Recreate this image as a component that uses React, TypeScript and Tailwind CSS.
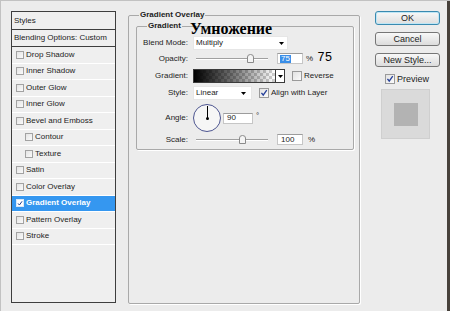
import React from "react";

function Check({ className }: { className: string }) {
  return (
    <svg viewBox="0 0 9 9" className={className}>
      <path d="M1.6 4.4 L3.6 6.8 L7.6 1.2" fill="none" stroke="currentColor" strokeWidth="1.5" />
    </svg>
  );
}

function SmallBox({ checked, white }: { checked?: boolean; white?: boolean }) {
  return (
    <div
      className={
        white
          ? "flex h-[8px] w-[8px] shrink-0 items-center justify-center border border-[#d8e8f8] bg-white"
          : "flex h-[8px] w-[8px] shrink-0 items-center justify-center border border-[#a2a2a2] bg-linear-to-br from-[#e4e4e4] to-[#fafafa]"
      }
    >
      {checked ? <Check className="h-[7px] w-[7px] text-[#1d3f8f]" /> : null}
    </div>
  );
}

function BigBox({ checked }: { checked?: boolean }) {
  return (
    <div className="flex h-[10px] w-[10px] shrink-0 items-center justify-center border border-[#9a9a9a] bg-linear-to-br from-[#e2e2e2] to-[#fbfbfb]">
      {checked ? <Check className="h-[8px] w-[8px] text-[#27419a]" /> : null}
    </div>
  );
}

function Arrow() {
  return (
    <svg width="5" height="3" viewBox="0 0 5 3" className="shrink-0">
      <path d="M0 0H5L2.5 3Z" fill="#000" />
    </svg>
  );
}

function Thumb({ className }: { className: string }) {
  return (
    <svg width="7" height="9" viewBox="0 0 7 9" className={className}>
      <path
        d="M0.5 3 Q0.5 0.5 3.5 0.5 Q6.5 0.5 6.5 3 L6.5 8.5 L0.5 8.5 Z"
        fill="#f4f4f4"
        stroke="#8a8a8a"
      />
    </svg>
  );
}

const items: { t: string; i?: boolean; a?: boolean }[] = [
  { t: "Drop Shadow" },
  { t: "Inner Shadow" },
  { t: "Outer Glow" },
  { t: "Inner Glow" },
  { t: "Bevel and Emboss" },
  { t: "Contour", i: true },
  { t: "Texture", i: true },
  { t: "Satin" },
  { t: "Color Overlay" },
  { t: "Gradient Overlay", a: true },
  { t: "Pattern Overlay" },
  { t: "Stroke" },
];

function Label({ children }: { children: React.ReactNode }) {
  return <div className="w-[52px] shrink-0 pr-[1px] text-right">{children}</div>;
}

export default function App() {
  return (
    <div className="flex h-[311px] w-[450px] overflow-hidden border-l border-t border-[#c2c2c2] bg-[#ececec] font-['Liberation_Sans',Arial,sans-serif] text-[8px] leading-none text-[#1c1c1c]">
      {/* Styles list */}
      <div className="ml-[10px] mt-[10px] flex h-[292px] w-[105px] shrink-0 flex-col border border-[#3e3e3e] bg-[#efefef]">
        <div className="flex h-[18px] shrink-0 items-center border-b border-[#3e3e3e] pl-[2px]">Styles</div>
        <div className="flex h-[17px] shrink-0 items-center border-b border-[#3e3e3e] pl-[2px]">
          Blending Options: Custom
        </div>
        {items.map((it) => (
          <div
            key={it.t}
            className={
              it.a
                ? "flex h-[16.5px] shrink-0 items-center border-b border-white bg-[#3597f0] pl-[4px] font-bold text-white"
                : it.i
                  ? "flex h-[16.5px] shrink-0 items-center border-b border-white pl-[13px]"
                  : "flex h-[16.5px] shrink-0 items-center border-b border-white pl-[4px]"
            }
          >
            <SmallBox checked={it.a} white={it.a} />
            <span className="ml-[2px]">{it.t}</span>
          </div>
        ))}
      </div>

      {/* Gradient Overlay group */}
      <div className="relative ml-[12px] mt-[14px] h-[289px] w-[232px] shrink-0 rounded-[2px] border border-[#a9a9a9] shadow-[1px_1px_0_#ffffff]">
        <div className="absolute left-[10px] top-[-6px] bg-[#ececec] px-[1px] text-[8px] font-bold leading-[10px]">
          Gradient Overlay
        </div>
        <div className="relative ml-[7px] mr-[5px] mt-[10px] flex h-[124px] flex-col rounded-[2px] border border-[#a9a9a9] pt-[9px] shadow-[1px_1px_0_#ffffff]">
          <div className="absolute left-[10px] top-[-6px] bg-[#ececec] px-[1px] font-bold leading-[10px]">Gradient</div>

          {/* Blend mode */}
          <div className="flex h-[14px] items-center">
            <Label>Blend Mode:</Label>
            <div className="ml-[4px] flex h-[14px] w-[95px] items-center justify-between border border-[#e6e6e6] bg-white pl-[2px] pr-[3px]">
              <span>Multiply</span>
              <Arrow />
            </div>
          </div>

          {/* Opacity */}
          <div className="mt-[2px] flex h-[13px] items-center">
            <Label>Opacity:</Label>
            <div className="relative ml-[7px] h-full w-[72px]">
              <div className="absolute left-0 right-0 top-[6px] h-[2px] border-b border-t border-b-white border-t-[#a0a0a0]" />
              <Thumb className="absolute left-[51px] top-[2px]" />
            </div>
            <div className="ml-[9px] flex h-[11px] w-[26px] items-center border border-[#c6c6c6] border-t-[#9c9c9c] bg-white pl-[2px]">
              <span className="bg-[#3a8ee8] px-[1px] text-white">75</span>
            </div>
            <span className="ml-[3px]">%</span>
            <span className="ml-[4px] font-['Liberation_Mono',monospace] text-[12.5px] leading-none text-black">75</span>
          </div>

          {/* Gradient */}
          <div className="mt-[4px] flex h-[14px] items-center">
            <Label>Gradient:</Label>
            <div className="ml-[4px] flex h-[14px] w-[92px] border border-[#3a3a3a]">
              <div className="h-full flex-1 bg-[repeating-conic-gradient(#cfcfcf_0_25%,#ffffff_0_50%)] bg-[length:6px_6px]">
                <div className="h-full w-full bg-linear-to-r from-black via-[#00000088] to-transparent" />
              </div>
              <div className="flex w-[9px] items-center justify-center border-l border-[#3a3a3a] bg-white">
                <Arrow />
              </div>
            </div>
            <div className="ml-[7px]">
              <BigBox />
            </div>
            <span className="ml-[2px]">Reverse</span>
          </div>

          {/* Style */}
          <div className="mt-[3px] flex h-[14px] items-center">
            <Label>Style:</Label>
            <div className="ml-[4px] flex h-[14px] w-[59px] items-center justify-between border border-[#e6e6e6] bg-white pl-[2px] pr-[5px]">
              <span>Linear</span>
              <Arrow />
            </div>
            <div className="ml-[7px]">
              <BigBox checked />
            </div>
            <span className="ml-[2px]">Align with Layer</span>
          </div>

          {/* Angle */}
          <div className="mt-[4px] flex h-[28px] items-center">
            <Label>Angle:</Label>
            <div className="relative ml-[4px] h-[28px] w-[28px] rounded-full border border-[#4d5590] bg-[#f6f6f6]">
              <div className="absolute left-[13px] top-[1px] h-[12px] w-[1px] bg-black" />
              <div className="absolute left-[12px] top-[12px] h-[3px] w-[3px] rounded-full bg-black" />
            </div>
            <div className="ml-[2px] flex h-[11px] w-[30px] items-center border border-[#c6c6c6] border-t-[#9c9c9c] bg-white pl-[3px]">
              90
            </div>
            <span className="mb-[4px] ml-[3px]">°</span>
          </div>

          {/* Scale */}
          <div className="mt-[2px] flex h-[11px] items-center">
            <Label>Scale:</Label>
            <div className="relative ml-[7px] h-full w-[72px]">
              <div className="absolute left-0 right-0 top-[5px] h-[2px] border-b border-t border-b-white border-t-[#a0a0a0]" />
              <Thumb className="absolute left-[43px] top-[1px]" />
            </div>
            <div className="ml-[9px] flex h-[11px] w-[26px] items-center border border-[#c6c6c6] border-t-[#9c9c9c] bg-white pl-[3px]">
              100
            </div>
            <span className="ml-[5px]">%</span>
          </div>
        </div>

        <div className="absolute left-[61px] top-[5px] font-['Liberation_Serif','Times_New_Roman',serif] text-[16px] font-bold leading-none text-black">
          Умножение
        </div>
      </div>

      {/* Right column */}
      <div className="ml-[15px] mt-[10px] flex w-[65px] shrink-0 flex-col text-[9px]">
        <div className="flex h-[14px] items-center justify-center rounded-[3px] border border-[#3a8ab0] bg-linear-to-b from-[#f8f8f8] to-[#dedede] shadow-[inset_0_0_0_1px_#bfe6f5]">
          OK
        </div>
        <div className="mt-[7px] flex h-[14px] items-center justify-center rounded-[3px] border border-[#767676] bg-linear-to-b from-[#f8f8f8] to-[#dcdcdc]">
          Cancel
        </div>
        <div className="mt-[7px] flex h-[14px] items-center justify-center rounded-[3px] border border-[#767676] bg-linear-to-b from-[#f8f8f8] to-[#dcdcdc]">
          New Style...
        </div>
        <div className="mt-[7px] flex h-[10px] items-center pl-[10px]">
          <BigBox checked />
          <span className="ml-[2px]">Preview</span>
        </div>
        <div className="ml-[6px] mt-[5px] flex h-[50px] w-[49px] items-center justify-center border border-[#cfcfcf] bg-[#dadada]">
          <div className="h-[23px] w-[24px] bg-[#b3b3b3]" />
        </div>
      </div>

      <div className="flex-1" />
      <div className="w-[3px] shrink-0 bg-[#47413b]" />
    </div>
  );
}
